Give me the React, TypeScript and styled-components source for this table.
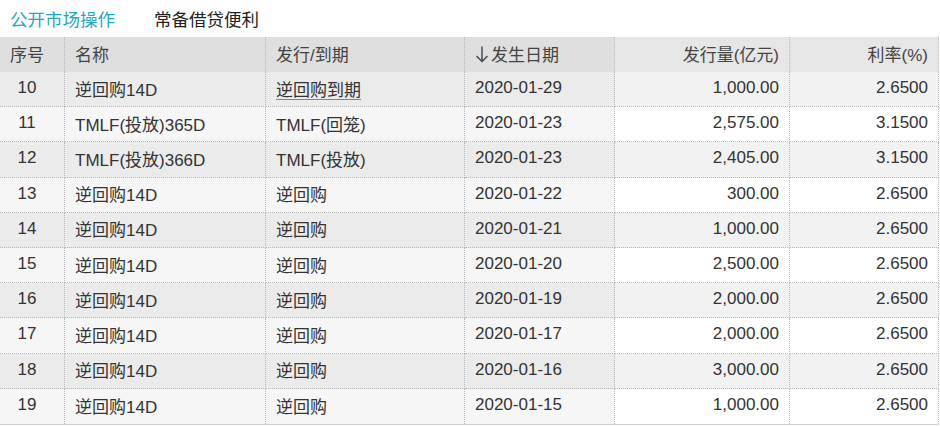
import React from 'react';
import styled, { createGlobalStyle } from 'styled-components';

const GlobalStyle = createGlobalStyle`
  body {
    margin: 0;
    background: #fff;
    font-family: "Liberation Sans", "Noto Sans CJK SC", sans-serif;
    color: #333;
  }
`;

const Page = styled.div`
  width: 940px;
`;

const TabBar = styled.div`
  display: flex;
  align-items: center;
  height: 37px;
  padding: 0 0 1px 10px;
  box-sizing: border-box;
  gap: 39px;
`;

const Tab = styled.span<{ $active?: boolean }>`
  font-size: 17.5px;
  color: ${(p) => (p.$active ? '#1ea7c6' : '#222')};
  cursor: pointer;
`;

const Table = styled.div`
  width: 939px;
  border-bottom: 1px solid #cfcfcf;
`;

const Row = styled.div<{ $head?: boolean }>`
  display: grid;
  grid-template-columns: 65px 201px 199px 150px 175px 149px;
  height: ${(p) => (p.$head ? '35px' : '35.2px')};
`;

type Tone = 'head' | 'gray' | 'white';

const tones: Record<Tone, [string, string]> = {
  head: ['#dfdfdf', '#e6e6e6'],
  gray: ['#ebebeb', '#f2f2f2'],
  white: ['#f6f6f6', '#ffffff'],
};

const Cell = styled.div<{ $align: 'left' | 'right' | 'center'; $tone: Tone; $tint: boolean; $last?: boolean }>`
  box-sizing: border-box;
  display: flex;
  align-items: center;
  justify-content: ${(p) => (p.$align === 'left' ? 'flex-start' : p.$align === 'right' ? 'flex-end' : 'center')};
  padding: ${(p) => (p.$align === 'center' ? '0 10px 2px 0' : '0 10px 2px 10px')};
  font-size: 17px;
  color: #333;
  white-space: nowrap;
  background: ${(p) => tones[p.$tone][p.$tint ? 0 : 1]};
  border-right: 1px dotted #b9b9b9;
  border-bottom: ${(p) => (p.$last || p.$tone === 'head' ? 'none' : '1px dotted #b9b9b9')};
`;

const HeadCell = styled(Cell)`
  color: #444;
`;

const LinkText = styled.span`
  text-decoration: underline;
  text-decoration-color: #1ea7c6;
  text-underline-offset: 3px;
  text-decoration-thickness: 1px;
  cursor: pointer;
`;

const SortArrow = styled.svg`
  width: 14px;
  height: 18px;
  margin-right: 2px;
  flex: none;
`;

interface Item {
  no: number;
  name: string;
  kind: string;
  date: string;
  amount: string;
  rate: string;
  link?: boolean;
}

const rows: Item[] = [
  { no: 10, name: '逆回购14D', kind: '逆回购到期', date: '2020-01-29', amount: '1,000.00', rate: '2.6500', link: true },
  { no: 11, name: 'TMLF(投放)365D', kind: 'TMLF(回笼)', date: '2020-01-23', amount: '2,575.00', rate: '3.1500' },
  { no: 12, name: 'TMLF(投放)366D', kind: 'TMLF(投放)', date: '2020-01-23', amount: '2,405.00', rate: '3.1500' },
  { no: 13, name: '逆回购14D', kind: '逆回购', date: '2020-01-22', amount: '300.00', rate: '2.6500' },
  { no: 14, name: '逆回购14D', kind: '逆回购', date: '2020-01-21', amount: '1,000.00', rate: '2.6500' },
  { no: 15, name: '逆回购14D', kind: '逆回购', date: '2020-01-20', amount: '2,500.00', rate: '2.6500' },
  { no: 16, name: '逆回购14D', kind: '逆回购', date: '2020-01-19', amount: '2,000.00', rate: '2.6500' },
  { no: 17, name: '逆回购14D', kind: '逆回购', date: '2020-01-17', amount: '2,000.00', rate: '2.6500' },
  { no: 18, name: '逆回购14D', kind: '逆回购', date: '2020-01-16', amount: '3,000.00', rate: '2.6500' },
  { no: 19, name: '逆回购14D', kind: '逆回购', date: '2020-01-15', amount: '1,000.00', rate: '2.6500' },
];

const aligns: ('left' | 'right' | 'center')[] = ['center', 'left', 'left', 'left', 'right', 'right'];

export default function App() {
  return (
    <Page>
      <GlobalStyle />
      <TabBar>
        <Tab $active>公开市场操作</Tab>
        <Tab>常备借贷便利</Tab>
      </TabBar>
      <Table>
        <Row $head>
          {['序号', '名称', '发行/到期', '发生日期', '发行量(亿元)', '利率(%)'].map((t, i) => (
            <HeadCell key={t} $align={aligns[i]} $tone="head" $tint={i < 4}>
              {i === 3 && (
                <SortArrow viewBox="0 0 14 18">
                  <path d="M7 1.5V16.5M1.5 11L7 16.5L12.5 11" fill="none" stroke="#444" strokeWidth="1.4" />
                </SortArrow>
              )}
              {t}
            </HeadCell>
          ))}
        </Row>
        {rows.map((r, idx) => {
          const tone: Tone = idx % 2 === 0 ? 'gray' : 'white';
          const last = idx === rows.length - 1;
          const vals = [String(r.no), r.name, r.kind, r.date, r.amount, r.rate];
          return (
            <Row key={r.no}>
              {vals.map((v, i) => (
                <Cell key={i} $align={aligns[i]} $tone={tone} $tint={i < 4} $last={last}>
                  {i === 2 && r.link ? <LinkText>{v}</LinkText> : v}
                </Cell>
              ))}
            </Row>
          );
        })}
      </Table>
    </Page>
  );
}
